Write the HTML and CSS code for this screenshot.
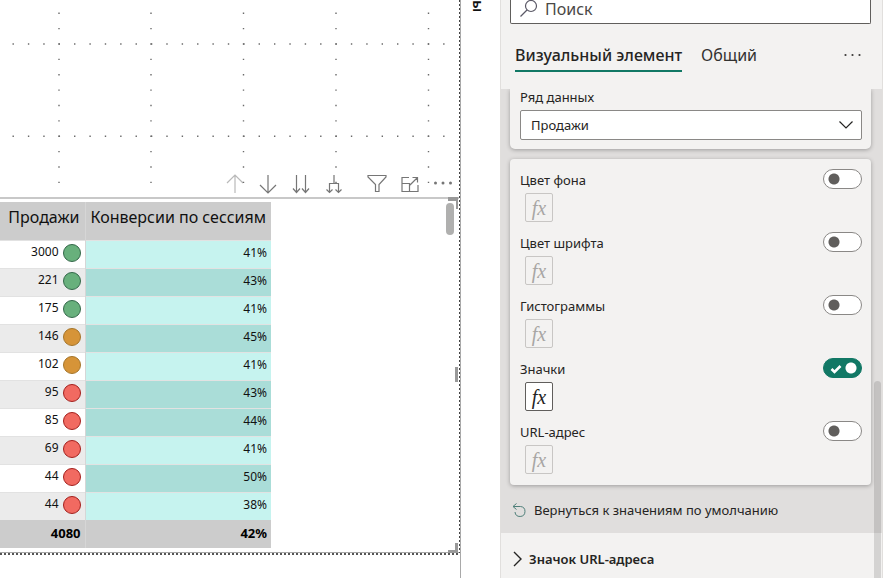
FILE: index.html
```
<!DOCTYPE html>
<html lang="ru">
<head>
<meta charset="utf-8">
<title>Формат визуального элемента</title>
<link rel="stylesheet" href="styles.css">
</head>
<body>
<main class="canvas">
  <svg class="guides" aria-hidden="true">
    <g stroke="#6b6b6b" stroke-width="1.4" stroke-dasharray="1.4 13.98">
      <path d="M59 12.5V197M151 12.5V197M243.500 12.5V197M336 12.5V197M428.500 12.5V197"/>
      <path d="M12.500 44H447M12.500 136.300H447"/>
    </g>
  </svg>
  <div class="toolbar">
    <button aria-label="Вверх" class="faded"><svg width="20" height="20" viewBox="0 0 20 20"><path d="M10 19V1M2 9L10 1L18 9"/></svg></button>
    <button aria-label="Вниз"><svg width="20" height="20" viewBox="0 0 20 20"><path d="M10 1V19M2 11L10 19L18 11"/></svg></button>
    <button aria-label="Следующий уровень"><svg width="20" height="20" viewBox="0 0 20 20"><path d="M5.500 1V18M14.500 1V18M2 14.500L5.500 18.500L9 14.500M11 14.500L14.500 18.500L18 14.500"/></svg></button>
    <button aria-label="Развернуть"><svg width="20" height="20" viewBox="0 0 20 20"><path d="M10 1V9M5.500 18V9.500H14.500V18M2.500 15.500L5.500 18.500L8.500 15.500M11.500 15.500L14.500 18.500L17.500 15.500"/></svg></button>
    <button aria-label="Фильтр" class="spaced"><svg width="20" height="20" viewBox="0 0 20 20"><path d="M1 1.500H19V3L12 10.500V17.500H8.500V10.500L1 3Z"/></svg></button>
    <button aria-label="Фокус"><svg width="20" height="20" viewBox="0 0 20 20"><path d="M9 3.500H2V17.500H18V11M2 9.500H9.500V17.500M10 11L17.500 3.500M12.500 3.500H17.500V8.500"/></svg></button>
    <button aria-label="Ещё"><svg width="20" height="20" viewBox="0 0 20 20"><g fill="#767676" stroke="none"><circle cx="2.500" cy="9" r="1.500"/><circle cx="10" cy="9" r="1.500"/><circle cx="17.500" cy="9" r="1.500"/></g></svg></button>
  </div>
  <section class="visual">
    <table>
      <thead><tr><th>Продажи</th><th>Конверсии по сессиям</th></tr></thead>
      <tbody>
        <tr><td>3000<i class="dot green"></i></td><td>41%</td></tr>
        <tr><td>221<i class="dot green"></i></td><td class="deep">43%</td></tr>
        <tr><td>175<i class="dot green"></i></td><td>41%</td></tr>
        <tr><td>146<i class="dot amber"></i></td><td class="deep">45%</td></tr>
        <tr><td>102<i class="dot amber"></i></td><td>41%</td></tr>
        <tr><td>95<i class="dot red"></i></td><td class="deep">43%</td></tr>
        <tr><td>85<i class="dot red"></i></td><td class="deep">44%</td></tr>
        <tr><td>69<i class="dot red"></i></td><td>41%</td></tr>
        <tr><td>44<i class="dot red"></i></td><td class="deep">50%</td></tr>
        <tr><td>44<i class="dot red"></i></td><td>38%</td></tr>
      </tbody>
      <tfoot><tr><td>4080</td><td>42%</td></tr></tfoot>
    </table>
    <span class="scroll-thumb"></span>
    <span class="handle corner-top"></span>
    <span class="handle side"></span>
    <span class="handle corner-bottom"></span>
  </section>
</main>
<aside class="filters"><span>ы</span></aside>
<aside class="pane">
  <header class="pane-head">
    <label class="search">
      <svg width="20" height="20" viewBox="0 0 20 20" aria-hidden="true"><g fill="none" stroke="#5a5866" stroke-width="1.200"><circle cx="12" cy="6" r="5.500"/><path d="M8 10L1.500 16.500"/></g></svg>
      <input type="text" placeholder="Поиск" aria-label="Поиск">
    </label>
    <nav class="tabs">
      <a href="#visual" class="active">Визуальный элемент</a>
      <a href="#general">Общий</a>
      <button class="more" aria-label="Ещё"><svg width="20" height="4" viewBox="0 0 20 4"><g fill="#3b3a39"><circle cx="1.500" cy="2" r="1.100"/><circle cx="8.500" cy="2" r="1.100"/><circle cx="15.500" cy="2" r="1.100"/></g></svg></button>
    </nav>
  </header>
  <div class="pane-body">
    <section class="card series">
      <label for="series">Ряд данных</label>
      <div class="select">
        <select id="series"><option>Продажи</option></select>
        <svg width="16" height="10" viewBox="0 0 16 10" aria-hidden="true"><path d="M1.500 1.500L8 8L14.500 1.500" fill="none" stroke="#252423" stroke-width="1.200"/></svg>
      </div>
    </section>
    <section class="card options">
      <div class="option"><label for="o1">Цвет фона</label><input type="checkbox" id="o1"><button class="fx" disabled>fx</button></div>
      <div class="option"><label for="o2">Цвет шрифта</label><input type="checkbox" id="o2"><button class="fx" disabled>fx</button></div>
      <div class="option"><label for="o3">Гистограммы</label><input type="checkbox" id="o3"><button class="fx" disabled>fx</button></div>
      <div class="option"><label for="o4">Значки</label><span class="switch"><input type="checkbox" id="o4" checked><svg width="12" height="10" viewBox="0 0 12 10" aria-hidden="true"><path d="M1.500 5L4.500 8L10.500 2" fill="none" stroke="#fff" stroke-width="2.600"/></svg></span><button class="fx">fx</button></div>
      <div class="option"><label for="o5">URL-адрес</label><input type="checkbox" id="o5"><button class="fx" disabled>fx</button></div>
    </section>
    <button class="reset"><svg width="15" height="15" viewBox="0 0 15 15" aria-hidden="true"><path d="M4.500 0.500L1 3.500L4.500 6.500M1 3.500H8.500A5 5 0 1 1 3 9" fill="none" stroke="#4f7f79"/></svg>Вернуться к значениям по умолчанию</button>
  </div>
  <button class="section-head"><svg width="10" height="16" viewBox="0 0 10 16" aria-hidden="true"><path d="M1 1L8 8L1 15" fill="none" stroke="#252423" stroke-width="1.400"/></svg>Значок URL-адреса</button>
  <span class="pane-scroll"></span>
</aside>
</body>
</html>
```
FILE: styles.css
```
* { box-sizing: border-box; }
body {
  margin: 0;
  display: flex;
  height: 100vh;
  overflow: hidden;
  background: #fff;
  color: #252423;
  font: 13px/20px "Noto Sans", "Open Sans", sans-serif;
}
button { font: inherit; color: inherit; background: none; border: 0; padding: 0; }
svg { display: block; flex: none; }

.canvas {
  position: relative;
  flex: 1;
  min-width: 0;
  border-right: 1px solid #a9a9a9;
}
.canvas::after {
  content: "";
  position: absolute;
  top: 0;
  right: 0;
  width: 1px;
  height: 553px;
  background: repeating-linear-gradient(#444 0 2px, #fff 2px 4px);
}
.guides { position: absolute; inset: 0; width: 100%; height: 198px; }
.toolbar {
  position: relative;
  display: flex;
  justify-content: flex-end;
  align-items: flex-end;
  gap: 13px;
  height: 197px;
  padding: 0 7px 3px 0;
}
.toolbar path { fill: none; stroke: #767676; stroke-width: 1.2; }
.toolbar .faded { opacity: 0.5; }
.toolbar .spaced { margin-left: 10px; }
.visual {
  position: relative;
  border-top: 2px solid #c8c8c8;
  border-bottom: 1px solid #a9a9a9;
  padding: 3px 0 4px;
}
.visual::after {
  content: "";
  position: absolute;
  left: 0;
  right: 0;
  top: 100%;
  margin-top: 1px;
  height: 2px;
  background: repeating-linear-gradient(90deg, #555 0 2px, #fff 2px 4px);
}

table { border-collapse: collapse; width: 271px; color: #111; font-size: 12px; }
th, td { height: 28px; padding: 0 4px; text-align: right; }
td { padding-bottom: 3px; line-height: 18px; }
th {
  height: 38px;
  padding: 0 5px 8px;
  background: #ccc;
  font-size: 16px;
  font-weight: 400;
  white-space: nowrap;
}
th:first-child, td:first-child { width: 87px; border-right: 1px solid #d6d6d6; }
th:last-child { text-align: left; }
tbody tr { border-top: 1px solid #e2e2e2; }
tbody tr:nth-child(even) { background: #ebebeb; }
tbody td:last-child { background: #c6f3ef; }
tbody td.deep:last-child { background: #aaddd8; }
tfoot { background: #ccc; font-size: 13px; font-weight: 700; color: #000; }
.dot {
  display: inline-block;
  width: 18px;
  height: 18px;
  margin-left: 4px;
  border: 1px solid;
  border-radius: 50%;
  vertical-align: middle;
}
.green { background: #68b07c; border-color: #34684a; }
.amber { background: #d69438; border-color: #a5752a; }
.red { background: #f16a61; border-color: #a3201d; }

.scroll-thumb {
  position: absolute;
  top: 4px;
  right: 6px;
  width: 8px;
  height: 32px;
  border-radius: 4px;
  background: #b0b0af;
}
.handle { position: absolute; right: 2px; border: 0 solid #999; }
.corner-top { top: -2px; width: 10px; height: 12px; border-width: 4px 2px 0 0; }
.side { top: 168px; width: 3px; height: 15px; background: #999; }
.corner-bottom { bottom: -1px; width: 10px; height: 10px; border-width: 0 3px 3px 0; }

.filters { flex: none; width: 39px; }
.filters span {
  display: block;
  margin-left: 8px;
  writing-mode: vertical-rl;
  font-size: 15px;
  font-weight: 600;
  color: #111;
}

.pane {
  position: relative;
  flex: none;
  display: flex;
  flex-direction: column;
  width: 383px;
  border-left: 1px solid #e1dfdd;
  border-right: 1px solid #e1dfdd;
  background: #f3f2f1;
}
.pane-head { height: 89px; padding: 0 11px 0 9px; }
.search {
  display: flex;
  align-items: flex-start;
  height: 24px;
  padding-left: 8px;
  border: 1px solid #605e5c;
  border-top: 0;
  border-radius: 0 0 2px 2px;
  background: #fff;
}
.search input {
  flex: 1;
  min-width: 0;
  height: 18px;
  margin-left: 6px;
  padding: 0;
  border: 0;
  outline: 0;
  background: none;
  font: 16px/18px "Noto Sans", sans-serif;
}
.search input::placeholder { color: #4a4846; opacity: 1; }
.tabs {
  display: flex;
  align-items: flex-start;
  gap: 19px;
  padding: 19px 7px 0 5px;
  font-size: 16px;
  line-height: 24px;
}
.tabs a { padding-bottom: 3px; color: #323130; text-decoration: none; white-space: nowrap; }
.tabs .active { border-bottom: 2px solid #117865; color: #252423; font-weight: 500; }
.more { margin: 10px 0 0 auto; }

.pane-body { background: #e0dedd; padding: 0 11px 0 9px; height: 444px; }
.card {
  background: #f3f2f1;
  border-radius: 4px;
  padding: 10px 9px 0 10px;
  box-shadow: 0 1px 4px #0000004d;
}
.series { height: 60px; padding-top: 0; border-radius: 0 0 5px 5px; clip-path: inset(0 -6px -6px); }
.series label { display: block; line-height: 17px; margin-bottom: 4px; }
.select { position: relative; }
.select select {
  display: block;
  width: 100%;
  height: 30px;
  padding: 0 10px;
  appearance: none;
  border: 1px solid #8a8886;
  border-radius: 2px;
  background: #fff;
  color: #252423;
  font: inherit;
}
.select svg { position: absolute; right: 8px; top: 10px; pointer-events: none; }
.options { margin-top: 10px; height: 326px; }
.option {
  display: grid;
  grid-template-columns: 1fr 39px;
  grid-template-rows: 24px 29px;
  align-items: start;
  height: 63px;
}
.option label { line-height: 22px; }
.option input {
  appearance: none;
  display: block;
  width: 39px;
  height: 20px;
  margin: 0;
  border: 1px solid #8a8886;
  border-radius: 10px;
  background: radial-gradient(circle at 10px 9px, #605e5c 5px, transparent 6px) #fff;
}
.switch { position: relative; }
.option input:checked {
  border-color: #117865;
  background: radial-gradient(circle at 27px 9px, #fff 5px, transparent 6px) #117865;
}
.switch svg { position: absolute; left: 7px; top: 6px; }
.fx {
  width: 28px;
  height: 29px;
  margin-left: 5px;
  border: 1px solid #605e5c;
  border-radius: 2px;
  background: #fff;
  font: italic 20px/24px "Liberation Serif", serif;
}
.fx:disabled { border-color: #c8c6c4; background: none; color: #a8a6a4; }
.reset { display: flex; align-items: center; gap: 7px; margin: 15px 0 0 2px; white-space: nowrap; }
.section-head {
  display: flex;
  align-items: center;
  gap: 6px;
  padding: 16px 12px 8px;
  font-weight: 600;
}
.pane-scroll {
  position: absolute;
  right: 1px;
  top: 381px;
  bottom: 0;
  width: 7px;
  border-radius: 4px 4px 0 0;
  background: #00000020;
}
```
